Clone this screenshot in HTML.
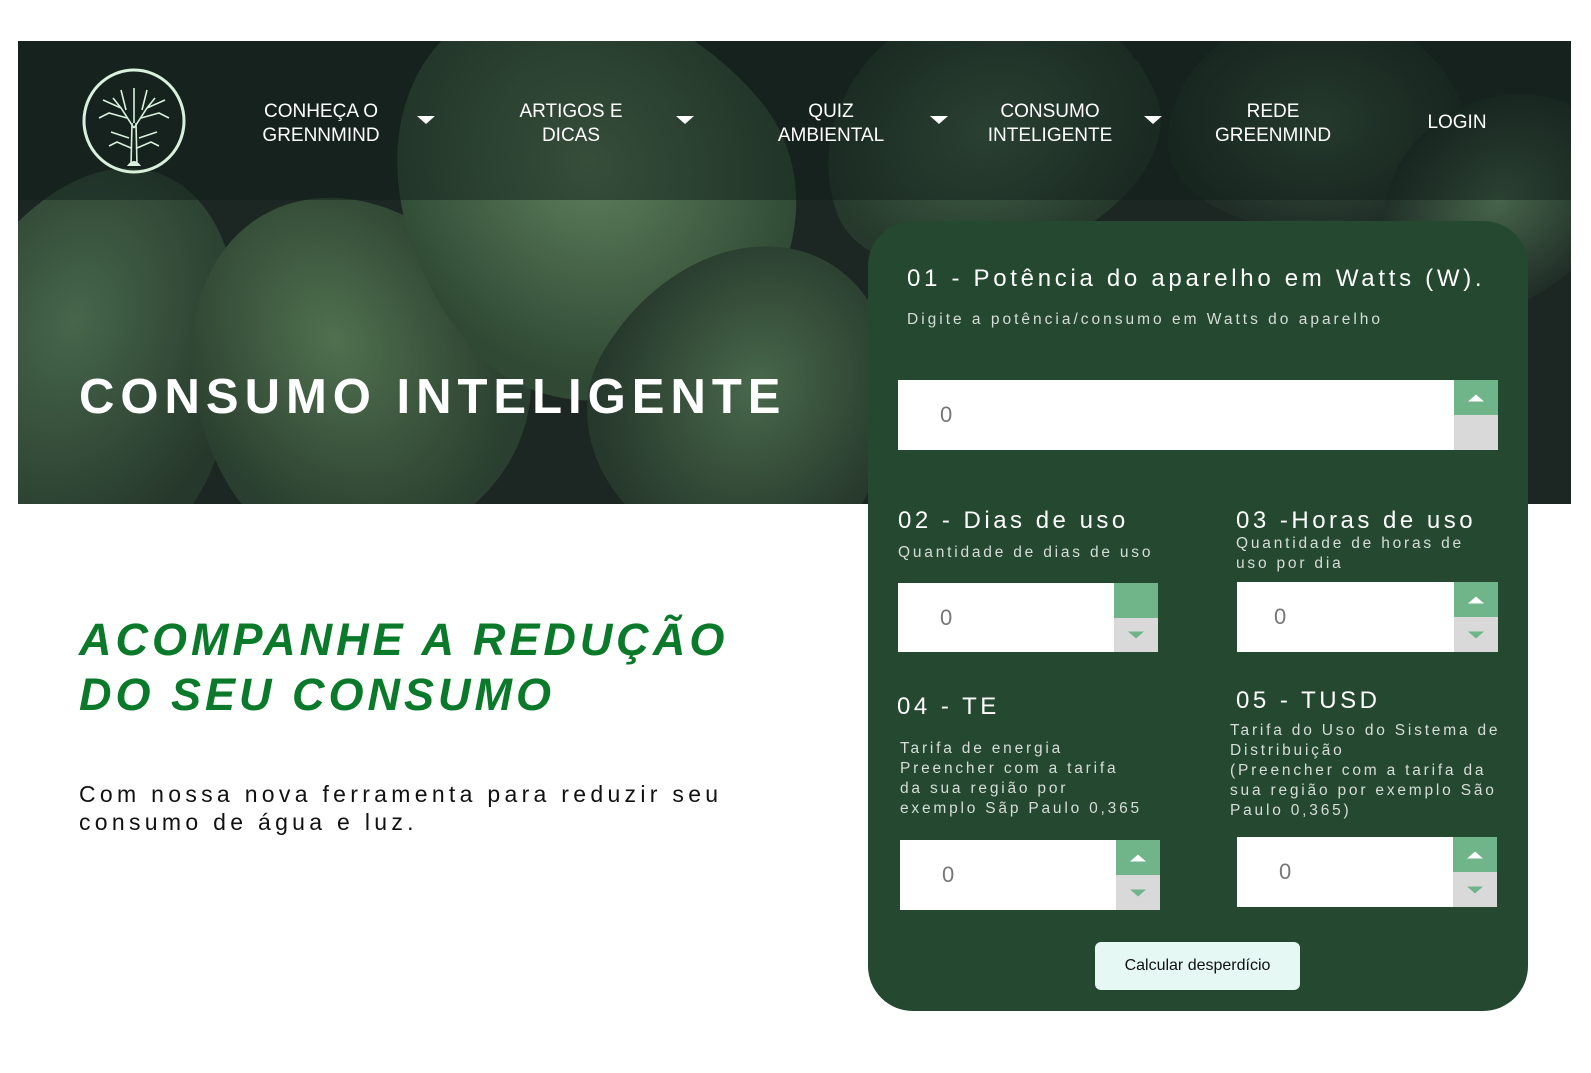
<!DOCTYPE html>
<html><head><meta charset="utf-8">
<style>
*{margin:0;padding:0;box-sizing:border-box}
body{width:1591px;height:1073px;background:#fff;position:relative;overflow:hidden;font-family:"Liberation Sans",sans-serif}
.hero{position:absolute;left:18px;top:41px;width:1553px;height:463px;overflow:hidden;background:#1c2622}
.leaf{position:absolute;border-radius:50% 50% 50% 50%/60% 60% 40% 40%;}
.navband{position:absolute;left:0;top:0;width:100%;height:159px;background:rgba(15,30,25,.5)}
.nav{position:absolute;color:#fff;font-size:19px;text-align:center;line-height:24px;transform:translateX(-50%);white-space:nowrap}
.arr{position:absolute;width:0;height:0;border-left:9px solid transparent;border-right:9px solid transparent;border-top:8px solid #fff}
.t{position:absolute;white-space:nowrap}
.card{position:absolute;left:868px;top:221px;width:660px;height:790px;background:#244830;border-radius:45px}
.in{position:absolute;background:#fff}
.in .v{position:absolute;left:42px;top:50%;transform:translateY(-50%);font-size:22px;color:#777}
.st{position:absolute;right:0;top:0;width:44px;height:100%;background:#d9d9d9}
.st .u{position:absolute;left:0;top:0;width:100%;height:50%;background:#6fb589}
.up{position:absolute;left:50%;top:50%;transform:translate(-50%,-50%);border-left:8px solid transparent;border-right:8px solid transparent;border-bottom:7px solid #fff}
.dn{position:absolute;left:50%;top:75%;transform:translate(-50%,-50%);border-left:8px solid transparent;border-right:8px solid transparent;border-top:7px solid #6fb589}
.ct{color:#fff;font-size:24px;letter-spacing:3.5px}
.cs{color:#d6ddd8;font-size:15.5px;letter-spacing:2.8px;line-height:20px}
</style></head><body>
<div class="hero">
  <div class="leaf" style="left:-80px;top:120px;width:300px;height:420px;background:radial-gradient(ellipse at 40% 40%,#46664b,#26382b 70%);transform:rotate(20deg)"></div>
  <div class="leaf" style="left:170px;top:150px;width:330px;height:360px;background:radial-gradient(ellipse at 50% 40%,#50704f,#2a3f2f 70%);transform:rotate(-30deg)"></div>
  <div class="leaf" style="left:380px;top:-60px;width:380px;height:420px;background:radial-gradient(ellipse at 55% 45%,#5e7e5c,#2f4934 70%);transform:rotate(-40deg)"></div>
  <div class="leaf" style="left:580px;top:200px;width:300px;height:320px;background:radial-gradient(ellipse at 50% 45%,#48684b,#27392c 70%);transform:rotate(30deg)"></div>
  <div class="leaf" style="left:800px;top:-40px;width:340px;height:260px;background:radial-gradient(ellipse at 50% 50%,#44634a,#26392c 70%);transform:rotate(-20deg)"></div>
  <div class="leaf" style="left:1150px;top:-30px;width:300px;height:220px;background:radial-gradient(ellipse at 50% 50%,#3a563e,#202e27 70%)"></div>
  <div class="leaf" style="left:1350px;top:60px;width:260px;height:200px;background:radial-gradient(ellipse at 50% 50%,#46644a,#202e27 70%);transform:rotate(-35deg)"></div>
  <div class="navband"></div>
  <svg style="position:absolute;left:63px;top:27px" width="106" height="106" viewBox="0 0 106 106">
    <ellipse cx="53" cy="53" rx="50" ry="51" fill="none" stroke="#d8f0dc" stroke-width="3"/>
    <g stroke="#d8f0dc" stroke-width="1.6" fill="none">
      <path d="M50 98 L51 55 M56 98 L55 55 M53 60 L40 40 L32 30 M53 60 L66 40 L74 30 M53 55 L53 20 M46 50 L28 45 L18 50 M60 50 L78 45 L88 50 M45 42 L40 22 M61 42 L66 22 M40 40 L22 32 M66 40 L84 32 M50 80 L36 74 L28 78 M56 80 L70 74 L78 78 M48 70 L30 64 M58 70 L76 64"/>
    </g>
    <path d="M46 98 Q53 88 60 98 Z" fill="#d8f0dc"/>
  </svg>
  <div class="nav" style="left:303px;top:59px">CONHEÇA O<br>GRENNMIND</div>
  <div class="nav" style="left:553px;top:59px">ARTIGOS E<br>DICAS</div>
  <div class="nav" style="left:813px;top:59px">QUIZ<br>AMBIENTAL</div>
  <div class="nav" style="left:1032px;top:59px">CONSUMO<br>INTELIGENTE</div>
  <div class="nav" style="left:1255px;top:59px">REDE<br>GREENMIND</div>
  <div class="nav" style="left:1439px;top:70px">LOGIN</div>
  <div class="arr" style="left:399px;top:75px"></div>
  <div class="arr" style="left:658px;top:75px"></div>
  <div class="arr" style="left:912px;top:75px"></div>
  <div class="arr" style="left:1126px;top:75px"></div>
  <div class="t" style="left:61px;top:328px;color:#fff;font-weight:bold;font-size:49px;letter-spacing:6px">CONSUMO INTELIGENTE</div>
</div>
<div class="t" style="left:79px;top:612px;color:#0a7a2a;font-weight:bold;font-style:italic;font-size:45px;letter-spacing:4px;line-height:55px">ACOMPANHE A REDUÇÃO<br>DO SEU CONSUMO</div>
<div class="t" style="left:79px;top:780px;color:#111;font-size:23px;letter-spacing:4.3px;line-height:28px">Com nossa nova ferramenta para reduzir seu<br>consumo de água e luz.</div>
<div class="card"></div>
<div class="t ct" style="left:907px;top:265px;letter-spacing:3.7px">01 - Potência do aparelho em Watts (W).</div>
<div class="t cs" style="left:907px;top:310px;letter-spacing:3px">Digite a potência/consumo em Watts do aparelho</div>
<div class="in" style="left:898px;top:380px;width:600px;height:70px"><span class="v">0</span><div class="st"><div class="u"><div class="up"></div></div></div></div>
<div class="t ct" style="left:898px;top:507px">02 - Dias de uso</div>
<div class="t cs" style="left:898px;top:543px">Quantidade de dias de uso</div>
<div class="in" style="left:898px;top:583px;width:260px;height:69px"><span class="v">0</span><div class="st"><div class="u"></div><div class="dn"></div></div></div>
<div class="t ct" style="left:1236px;top:507px">03 -Horas de uso</div>
<div class="t cs" style="left:1236px;top:534px">Quantidade de horas de<br>uso por dia</div>
<div class="in" style="left:1237px;top:582px;width:261px;height:70px"><span class="v" style="left:37px">0</span><div class="st"><div class="u"><div class="up"></div></div><div class="dn"></div></div></div>
<div class="t ct" style="left:897px;top:693px">04 - TE</div>
<div class="t cs" style="left:900px;top:739px">Tarifa de energia<br>Preencher com a tarifa<br>da sua região por<br>exemplo Sãp Paulo 0,365</div>
<div class="in" style="left:900px;top:840px;width:260px;height:70px"><span class="v">0</span><div class="st"><div class="u"><div class="up"></div></div><div class="dn"></div></div></div>
<div class="t ct" style="left:1236px;top:687px">05 - TUSD</div>
<div class="t cs" style="left:1230px;top:721px">Tarifa do Uso do Sistema de<br>Distribuição<br>(Preencher com a tarifa da<br>sua região por exemplo São<br>Paulo 0,365)</div>
<div class="in" style="left:1237px;top:837px;width:260px;height:70px"><span class="v">0</span><div class="st"><div class="u"><div class="up"></div></div><div class="dn"></div></div></div>
<div class="t" style="left:1095px;top:942px;width:205px;height:48px;background:#e6f8f4;border-radius:6px;font-size:16px;color:#111;text-align:center;line-height:48px">Calcular desperdício</div>
</body></html>
